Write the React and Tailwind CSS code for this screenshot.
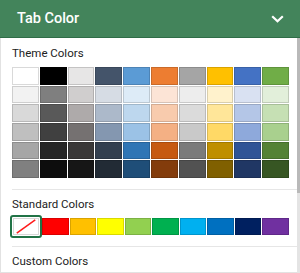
const THEME_ROWS = [
  ['#FFFFFF', '#000000', '#E7E6E6', '#44546A', '#5B9BD5', '#ED7D31', '#A5A5A5', '#FFC000', '#4472C4', '#70AD47'],
  ['#F2F2F2', '#7F7F7F', '#D0CECE', '#D6DCE4', '#DDEBF7', '#FCE4D6', '#EDEDED', '#FFF2CC', '#D9E1F2', '#E2EFDA'],
  ['#D9D9D9', '#595959', '#AEAAAA', '#ACB9CA', '#BDD7EE', '#F8CBAD', '#DBDBDB', '#FFE699', '#B4C6E7', '#C6E0B4'],
  ['#BFBFBF', '#404040', '#757171', '#8497B0', '#9BC2E6', '#F4B084', '#C9C9C9', '#FFD966', '#8EA9DB', '#A9D08E'],
  ['#A6A6A6', '#262626', '#3A3838', '#333F4F', '#2F75B5', '#C65911', '#7B7B7B', '#BF8F00', '#305496', '#548235'],
  ['#808080', '#0D0D0D', '#161616', '#222B35', '#1F4E78', '#833C0C', '#525252', '#806000', '#203764', '#375623'],
];

const STANDARD = ['#FF0000', '#FFC000', '#FFFF00', '#92D050', '#00B050', '#00B0F0', '#0070C0', '#002060', '#7030A0'];

function Swatch({ color }) {
  return (
    <div
      className="h-[17.7px] border border-black/15"
      style={{ backgroundColor: color }}
    />
  );
}

export default function App() {
  return (
    <div className="w-[300px] h-[273px] overflow-hidden bg-white text-[#222]" style={{ fontFamily: 'Roboto, "Noto Sans", sans-serif' }}>
      {/* Header */}
      <div className="h-[38px] bg-[#43845b] border-b border-[#2f6d47] flex items-center justify-between pl-[17px] pr-[16px]">
        <span className="text-white text-[14.5px] font-medium">Tab Color</span>
        <svg width="13" height="8" viewBox="0 0 13 8" className="mt-[1px]">
          <path d="M1.2 1.2 L6.5 6.3 L11.8 1.2" fill="none" stroke="white" strokeWidth="2.2" />
        </svg>
      </div>

      <div className="flex h-[235px]">
        {/* Panel */}
        <div className="flex-1 border-l border-b border-[#e2e2e2]">
          <div className="pl-[11px] pt-[7px] text-[11.5px] leading-[16px]">Theme Colors</div>
          <div className="ml-[11px] mt-[6px] w-[277px] grid grid-cols-10 gap-px">
            {THEME_ROWS.flat().map((c, i) => (
              <Swatch key={i} color={c} />
            ))}
          </div>

          <div className="ml-[11px] mt-[11px] border-t border-[#e6e6e6]" />
          <div className="pl-[11px] pt-[6px] text-[11.5px] leading-[16px]">Standard Colors</div>

          <div className="ml-[9px] mt-[3px] flex items-center">
            <div className="w-[32px] h-[23px] rounded-[3px] border-2 border-[#217346] p-px">
              <div className="w-full h-full border border-[#d8d8d8] bg-white">
                <svg width="100%" height="100%" viewBox="0 0 26 17" preserveAspectRatio="none">
                  <path d="M3 16 L23 1" stroke="#ff1a1a" strokeWidth="1.6" />
                </svg>
              </div>
            </div>
            <div className="w-[247px] grid grid-cols-9 gap-px">
              {STANDARD.map((c) => (
                <Swatch key={c} color={c} />
              ))}
            </div>
          </div>

          <div className="ml-[11px] mt-[8px] border-t border-[#e6e6e6]" />
          <div className="pl-[11px] pt-[6px] text-[11.5px] leading-[16px]">Custom Colors</div>
        </div>

        {/* Scrollbar */}
        <div className="w-[3px] flex flex-col">
          <div className="h-[155px] bg-[#b9b9b9]" />
          <div className="flex-1 bg-[#e4e4e4]" />
        </div>
      </div>
    </div>
  );
}
